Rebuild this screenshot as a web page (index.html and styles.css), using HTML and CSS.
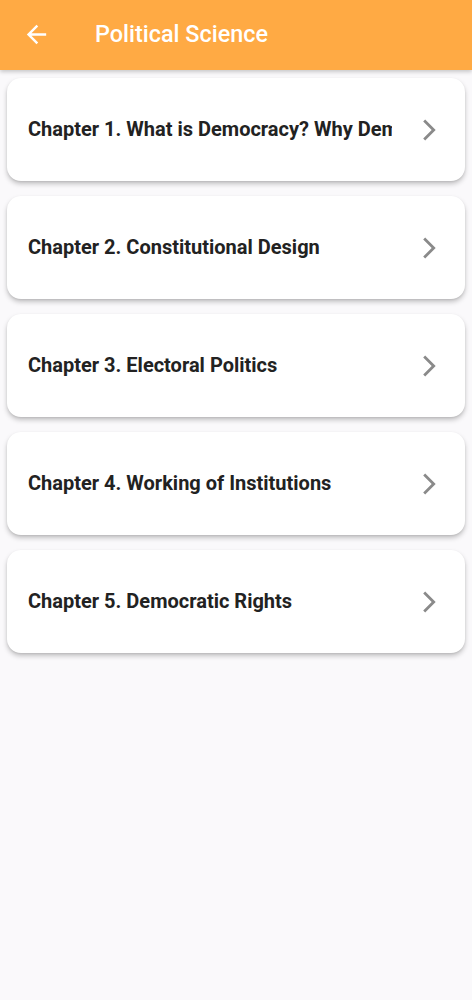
FILE: index.html
```html
<!DOCTYPE html>
<html>
<head>
<meta charset="utf-8">
<link rel="stylesheet" href="styles.css">
</head>
<body>
<header class="appbar">
  <svg class="back" width="24" height="24" viewBox="0 0 24 24"><path d="M20 11H7.83l5.59-5.59L12 4l-8 8 8 8 1.41-1.41L7.83 13H20v-2z" fill="#fff"/></svg>
  <h1 class="title">Political Science</h1>
</header>
<main class="list">
  <div class="card"><span class="label">Chapter 1. What is Democracy? Why Democracy?</span><svg class="chev" viewBox="0 0 24 24"><path d="M8.6 4.6 7.2 6l6 6-6 6 1.4 1.4 7.4-7.4z" fill="#8a8a8a"/></svg></div>
  <div class="card"><span class="label">Chapter 2. Constitutional Design</span><svg class="chev" viewBox="0 0 24 24"><path d="M8.6 4.6 7.2 6l6 6-6 6 1.4 1.4 7.4-7.4z" fill="#8a8a8a"/></svg></div>
  <div class="card"><span class="label">Chapter 3. Electoral Politics</span><svg class="chev" viewBox="0 0 24 24"><path d="M8.6 4.6 7.2 6l6 6-6 6 1.4 1.4 7.4-7.4z" fill="#8a8a8a"/></svg></div>
  <div class="card"><span class="label">Chapter 4. Working of Institutions</span><svg class="chev" viewBox="0 0 24 24"><path d="M8.6 4.6 7.2 6l6 6-6 6 1.4 1.4 7.4-7.4z" fill="#8a8a8a"/></svg></div>
  <div class="card"><span class="label">Chapter 5. Democratic Rights</span><svg class="chev" viewBox="0 0 24 24"><path d="M8.6 4.6 7.2 6l6 6-6 6 1.4 1.4 7.4-7.4z" fill="#8a8a8a"/></svg></div>
</main>
</body>
</html>
```
FILE: styles.css
```css
html, body {
  margin: 0;
  padding: 0;
  background: #faf9fb;
  font-family: Roboto, "Liberation Sans", sans-serif;
}
.appbar {
  height: 70px;
  background: #ffaa44;
  display: flex;
  align-items: center;
  box-shadow: 0 2px 4px rgba(0,0,0,0.2);
  position: relative;
  z-index: 1;
}
.back {
  width: 29px;
  height: 29px;
  margin-left: 22px;
  margin-top: -2px;
}
.title {
  margin: -2px 0 0 44px;
  color: #fff;
  font-size: 23.4px;
  font-weight: 500;
}
.list {
  display: flex;
  flex-direction: column;
  gap: 15px;
  padding: 8px 7px;
}
.card {
  height: 103px;
  background: #fff;
  border-radius: 14px;
  box-shadow: 0 3px 5px rgba(0,0,0,0.22), 0 1px 2px rgba(0,0,0,0.08);
  display: flex;
  align-items: center;
  padding: 0 18px 0 21px;
}
.label {
  flex: 1;
  min-width: 0;
  white-space: nowrap;
  overflow: hidden;
  text-overflow: clip;
  font-size: 20px;
  font-weight: 700;
  color: #222;
  margin-right: 21.5px;
  margin-top: -2px;
}
.chev {
  width: 34px;
  height: 34px;
  flex: none;
}
```
